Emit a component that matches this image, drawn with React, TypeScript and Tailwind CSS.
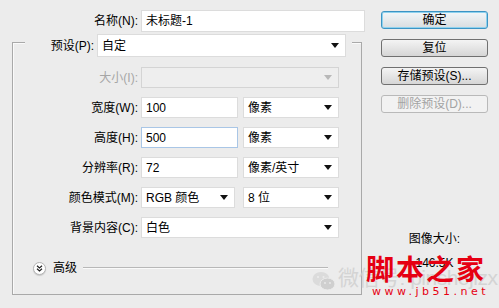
import React from "react";

const FONT = '"Liberation Sans", "Noto Sans CJK SC", sans-serif';

function Arrow({ disabled }: { disabled?: boolean }) {
  return (
    <svg width="8" height="5" viewBox="0 0 8 5" className="shrink-0">
      <path d="M0 0 H8 L4 5 Z" fill={disabled ? "#b8b8b8" : "#111"} />
    </svg>
  );
}

function Field({ value, w, focus }: { value: string; w: string; focus?: boolean }) {
  return (
    <div
      className={`${w} h-full bg-white border ${focus ? "border-[#a9c6e6]" : "border-[#dcdcdc]"} flex items-center pl-[4px] text-[12px] text-black`}
    >
      {value}
    </div>
  );
}

function Select({ value, w, disabled }: { value: string; w: string; disabled?: boolean }) {
  return (
    <div
      className={`${w} h-full border ${disabled ? "bg-[#eeeeee] border-[#d4d4d4]" : "bg-white border-[#dcdcdc]"} flex items-center justify-between pl-[4px] pr-[6px] text-[12px] text-black`}
    >
      <span>{value}</span>
      <Arrow disabled={disabled} />
    </div>
  );
}

function Label({ text, w, disabled }: { text: string; w: string; disabled?: boolean }) {
  return (
    <div className={`${w} shrink-0 text-right pr-[3px] text-[12px] ${disabled ? "text-[#a6a6a6]" : "text-black"}`}>
      {text}
    </div>
  );
}

function Btn({ text, primary, disabled }: { text: string; primary?: boolean; disabled?: boolean }) {
  const cls = disabled
    ? "border-[#b9b9b9] bg-[#f2f2f2] text-[#a3a3a3]"
    : primary
    ? "border-[#3c94c4] bg-gradient-to-b from-[#f3f7f9] to-[#d9dde0] text-black shadow-[inset_0_0_0_1px_#8fd2ee]"
    : "border-[#707070] bg-gradient-to-b from-[#f4f4f4] to-[#d6d6d6] text-black";
  return (
    <div className={`w-[107px] h-[18px] rounded-[3px] border ${cls} flex items-center justify-center text-[12px] leading-none`}>
      {text}
    </div>
  );
}

export default function App() {
  return (
    <div
      className="relative w-[499px] h-[308px] bg-[#ececec] flex overflow-hidden"
      style={{ fontFamily: FONT }}
    >
      {/* Left column */}
      <div className="w-[381px] shrink-0 flex flex-col pt-[10px]">
        <div className="flex items-center h-[22px]">
          <Label text="名称(N):" w="w-[141px]" />
          <Field value="未标题-1" w="w-[224px]" />
        </div>

        {/* group box */}
        <div className="mt-[10px] ml-[12px] w-[350px] h-[253px] border border-[#a9a9a9] shadow-[inset_1px_1px_0_#fafafa] flex flex-col">
          <div className="-mt-[9px] ml-[12px] w-[327px] h-[23px] bg-[#ececec] flex items-center">
            <Label text="预设(P):" w="w-[72px]" />
            <Select value="自定" w="w-[249px]" />
          </div>

          <div className="mt-[10px] flex flex-col gap-[9px]">
            <div className="flex items-center h-[21px]">
              <Label text="大小(I):" w="w-[128px]" disabled />
              <Select value="" w="w-[198px]" disabled />
            </div>
            <div className="flex items-center h-[21px]">
              <Label text="宽度(W):" w="w-[128px]" />
              <Field value="100" w="w-[97px]" />
              <div className="w-[5px]" />
              <Select value="像素" w="w-[96px]" />
            </div>
            <div className="flex items-center h-[21px]">
              <Label text="高度(H):" w="w-[128px]" />
              <Field value="500" w="w-[97px]" focus />
              <div className="w-[5px]" />
              <Select value="像素" w="w-[96px]" />
            </div>
            <div className="flex items-center h-[21px]">
              <Label text="分辨率(R):" w="w-[128px]" />
              <Field value="72" w="w-[97px]" />
              <div className="w-[5px]" />
              <Select value="像素/英寸" w="w-[96px]" />
            </div>
            <div className="flex items-center h-[21px]">
              <Label text="颜色模式(M):" w="w-[128px]" />
              <Select value="RGB 颜色" w="w-[94px]" />
              <div className="w-[8px]" />
              <Select value="8 位" w="w-[96px]" />
            </div>
            <div className="flex items-center h-[21px]">
              <Label text="背景内容(C):" w="w-[128px]" />
              <Select value="白色" w="w-[198px]" />
            </div>
          </div>

          {/* advanced */}
          <div className="mt-[23px] ml-[20px] flex items-center h-[14px]">
            <div className="w-[13px] h-[13px] rounded-full bg-white border border-[#b5b5b5] shadow-[0_1px_1px_#c8c8c8] flex items-center justify-center">
              <svg width="7" height="7" viewBox="0 0 7 7">
                <path d="M1 0.8 L3.5 3 L6 0.8 M1 3.8 L3.5 6 L6 3.8" stroke="#222" strokeWidth="1.2" fill="none" />
              </svg>
            </div>
            <span className="ml-[7px] text-[12px] text-black">高级</span>
            <div className="ml-[6px] w-[245px] h-[2px] border-t border-[#b8b8b8] border-b border-b-[#fafafa]" />
          </div>
        </div>
      </div>

      {/* Right column */}
      <div className="flex flex-col pt-[11px] w-[107px]">
        <div className="flex flex-col gap-[10px]">
          <Btn text="确定" primary />
          <Btn text="复位" />
          <Btn text="存储预设(S)..." />
          <Btn text="删除预设(D)..." disabled />
        </div>
        <div className="mt-[118px] text-center text-[12px] text-black leading-[16px]">图像大小:</div>
        <div className="mt-[8px] text-center text-[12px] text-black leading-[16px]">146.5K</div>
      </div>

      {/* watermark overlays */}
      <div className="absolute left-[312px] top-[271px] opacity-70">
        <svg width="24" height="21" viewBox="0 0 24 21">
          <ellipse cx="9" cy="8" rx="8.5" ry="7" fill="#d4d4d4" />
          <ellipse cx="15.5" cy="13" rx="7.5" ry="6" fill="#c4c4c4" stroke="#ececec" strokeWidth="1" />
          <circle cx="6" cy="6" r="1.1" fill="#ececec" />
          <circle cx="11.5" cy="6" r="1.1" fill="#ececec" />
          <circle cx="13" cy="12" r="0.9" fill="#ececec" />
          <circle cx="18" cy="12" r="0.9" fill="#ececec" />
        </svg>
      </div>
      <div
        className="absolute left-[338px] top-[262px] text-[21px] text-[#cfcfcf] opacity-80 whitespace-nowrap tracking-[-0.5px]"
        style={{ fontFamily: FONT }}
      >
        微信号: pinshejizx
      </div>
      <div
        className="absolute left-[366px] top-[250px] text-[28px] font-bold text-[#e60012] whitespace-nowrap tracking-[2px] leading-[36px]"
        style={{ fontFamily: '"Noto Sans CJK SC", sans-serif' }}
      >
        脚本之家
      </div>
      <div
        className="absolute left-[372px] top-[286px] text-[11px] text-[#e60012] whitespace-nowrap tracking-[3.5px] leading-[12px]"
        style={{ fontFamily: '"DejaVu Sans", sans-serif' }}
      >
        www.jb51.net
      </div>
    </div>
  );
}
